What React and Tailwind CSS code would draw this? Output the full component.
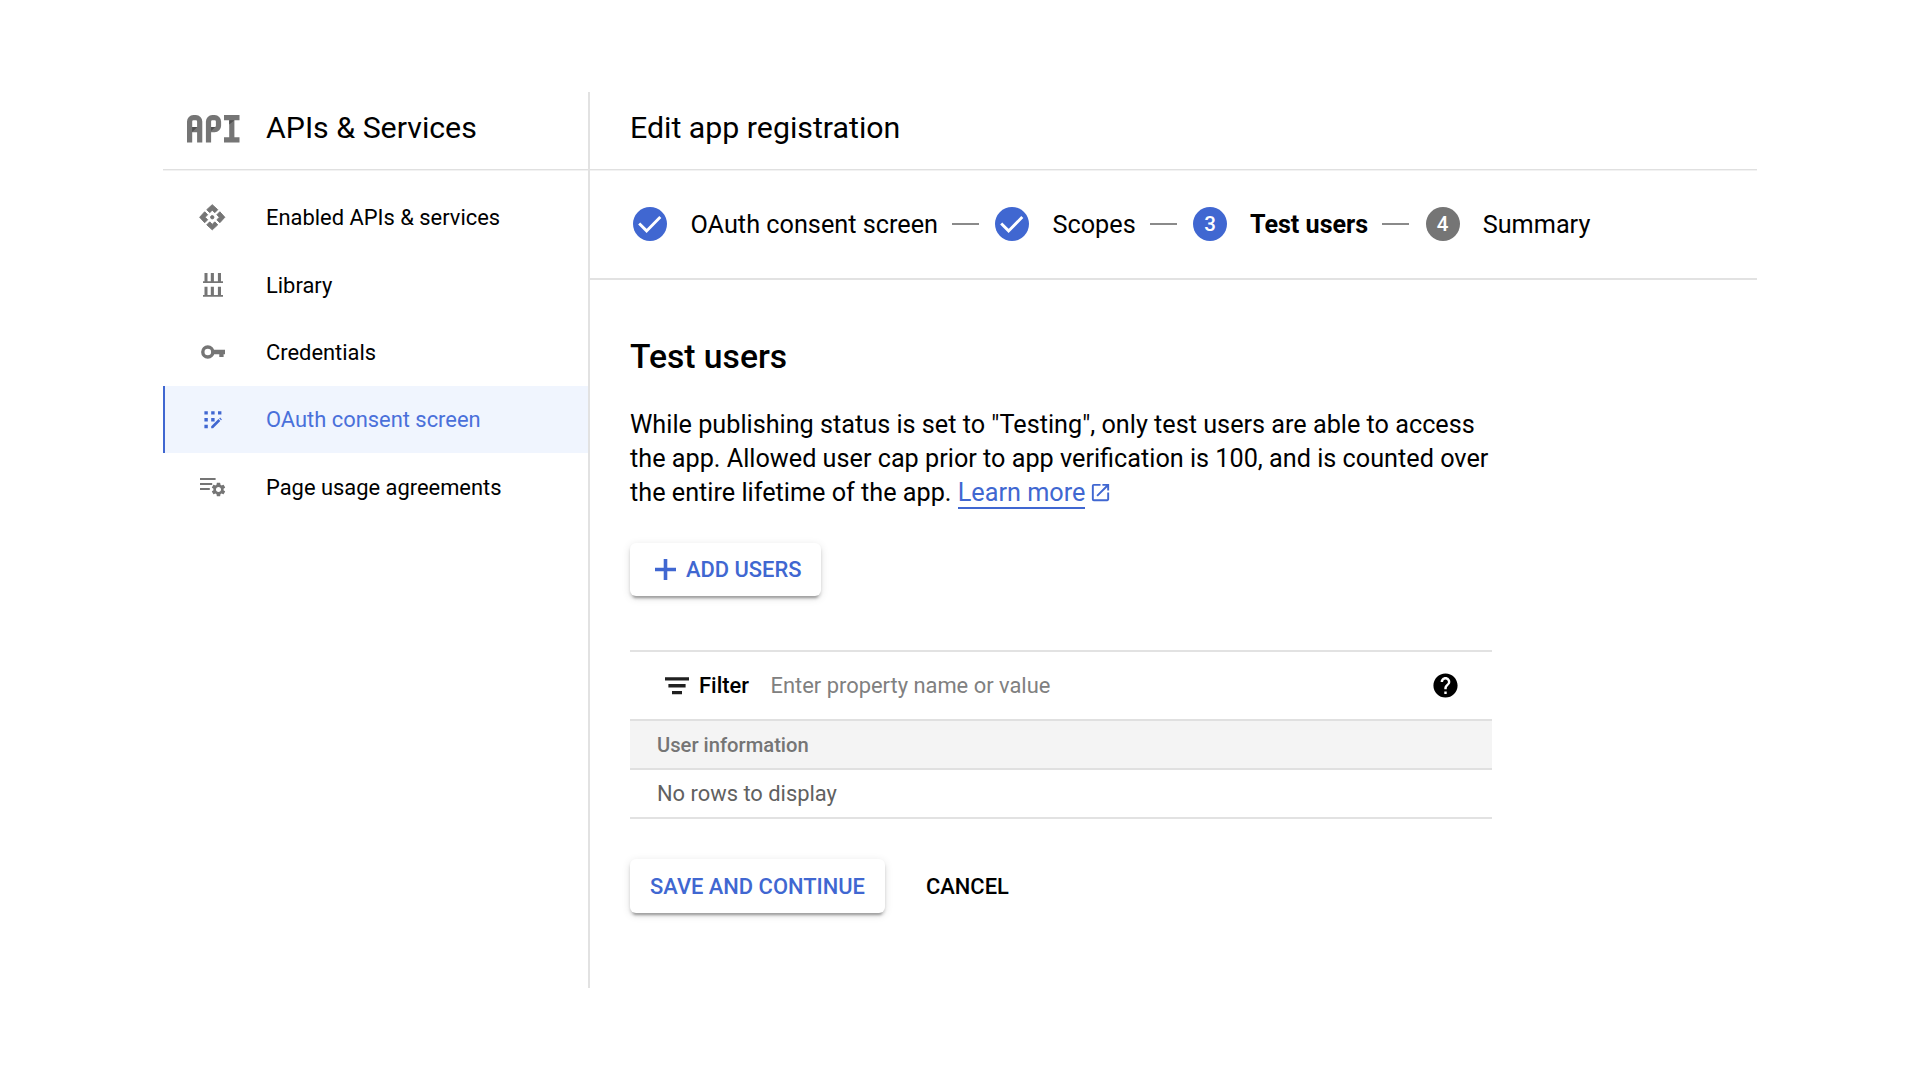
import React from "react";
import { MdHelp, MdOutlineOpenInNew, MdSettings } from "react-icons/md";

function ApiLogo() {
  return (
    <svg width="53" height="28" viewBox="0 0 53 28" fill="none" className="block">
      <g stroke="#757575" strokeWidth="5.2">
        <path d="M2.6 27.4V6.5a3.8 3.8 0 0 1 3.8-3.8h2.5a3.8 3.8 0 0 1 3.8 3.8v20.9M2.6 14.6h10.1" />
        <path d="M21.5 27.4V6.5a3.8 3.8 0 0 1 3.8-3.8h2.4a3.8 3.8 0 0 1 3.8 3.8v4.3a3.8 3.8 0 0 1-3.8 3.8h-6.2" />
        <path d="M37 2.6h15.5M44.8 2.6v22M37 24.8h15.5" />
      </g>
      <path d="M5.2 12h5l-5 5zM24.1 12h4.2l-4.2 4zM42.2 5.2h5.2l-5.2 4.4z" fill="#505050" />
    </svg>
  );
}

function ApiIcon() {
  return (
    <svg width="28.5" height="28.5" viewBox="0 0 24 24" fill="#757575" stroke="#757575" strokeWidth="0.8" strokeLinejoin="round">
      <circle cx="12" cy="12" r="1.4" />
      <path d="M12 6l2.12 2.12 2.5-2.5L12 1.4 7.38 5.62l2.5 2.5zM6 12l2.12-2.12-2.5-2.5L1.4 12l4.22 4.62 2.5-2.5zM18 12l-2.12 2.12 2.5 2.5L22.6 12l-4.22-4.62-2.5 2.5zM12 18l-2.12-2.12-2.5 2.5L12 22.6l4.62-4.22-2.5-2.5z" />
    </svg>
  );
}

function LibraryIcon() {
  return (
    <svg width="20" height="24" viewBox="0 0 20 24" fill="#757575">
      <path d="M1.5 0h3v8.3h3.3V0h3.1v8.3h4V0h3.1v8.3H20V10H0V8.3h1.5z" />
      <path d="M1.5 13.8h3v8.2h3.3v-8.2h3.1v8.2h4v-8.2h3.1v8.2H20v1.7H0v-1.7h1.5z" />
    </svg>
  );
}

function KeyIcon() {
  return (
    <svg width="24" height="14" viewBox="0 0 24 14" fill="none">
      <circle cx="6.8" cy="7" r="5" stroke="#757575" strokeWidth="3.4" />
      <path d="M12 4.7h12v4.6h-1.4v2.6h-4.3V9.3H12z" fill="#757575" />
    </svg>
  );
}

function ConsentIcon() {
  return (
    <svg width="18" height="18" viewBox="0 0 18 18" fill="#4067d1">
      <path d="M.4.2h3.4v3.4H.4zM7.2.2h3.4v3.4H7.2zM14 .2h3.4v3.4H14zM.4 7h3.4v3.4H.4zM7.2 7h3.4v3.4H7.2zM.4 13.8h3.4v3.4H.4z" />
      <path d="M7.2 17.2v-1.9l7.3-7.2 1.8 1.8-7.2 7.3zM15.2 7.4l.9-.8 1.8 1.8-.8.9z" />
    </svg>
  );
}

function AgreementsIcon() {
  return (
    <div className="mt-[2px] ml-[1px] h-5 w-[26px] relative">
      <svg width="16" height="14" viewBox="0 0 16 14" fill="#757575" className="block">
        <path d="M0 0h15.6v2.1H0zM0 5h12.2v2.1H0zM0 10h9.8v2.1H0z" />
      </svg>
      <MdSettings className="absolute top-[3.5px] left-[10px] size-[17px] text-[#757575]" />
    </div>
  );
}

const navItems = [
  { label: "Enabled APIs & services", icon: <ApiIcon /> },
  { label: "Library", icon: <LibraryIcon /> },
  { label: "Credentials", icon: <KeyIcon /> },
  { label: "OAuth consent screen", icon: <ConsentIcon />, active: true },
  { label: "Page usage agreements", icon: <AgreementsIcon /> },
];

function NavItem({ item }) {
  return (
    <li
      className={
        "flex h-[67.33px] items-center border-l-2 " +
        (item.active ? "border-[#4067d1] bg-[#f0f5fe] text-[#4a70da]" : "border-transparent")
      }
    >
      <span className="flex w-[95px] shrink-0 justify-center text-[#757575]">{item.icon}</span>
      <span className="ml-[6px] pt-[1.4px] text-[21.9px]">{item.label}</span>
    </li>
  );
}

function Sidebar() {
  return (
    <aside className="w-[427px] shrink-0 border-r-2 border-[#e2e2e2]">
      <header className="flex h-[78px] items-center border-b border-[#e0e0e0] pb-[5px] pl-6 shadow-[0_1px_0_#f2f2f2]">
        <div className="pt-[1px]">
          <ApiLogo />
        </div>
        <h1 className="ml-[26px] text-[30.3px]">APIs &amp; Services</h1>
      </header>
      <ul className="pt-[14px]">
        {navItems.map((item) => (
          <NavItem key={item.label} item={item} />
        ))}
      </ul>
    </aside>
  );
}

function Badge({ children, muted }) {
  return (
    <span
      className={
        "flex size-[34px] shrink-0 items-center justify-center rounded-full text-[20.5px] font-medium text-white " +
        (muted ? "bg-[#757575]" : "bg-[#4067d1]")
      }
    >
      {children}
    </span>
  );
}

function Check() {
  return (
    <svg width="34" height="34" viewBox="0 0 34 34" fill="none" stroke="#fff" strokeWidth="2.9">
      <path d="M6.2 16.5l7.4 7.4L27.3 10.1" />
    </svg>
  );
}

function Connector() {
  return <span className="h-[2px] w-[27px] shrink-0 bg-[#8a8a8a]" />;
}

function Stepper() {
  return (
    <nav className="flex h-[110px] items-center border-b-2 border-[#e2e2e2] pl-[43px] text-[25.25px]">
      <Badge><Check /></Badge>
      <span className="ml-[23.5px] w-[261.5px] pt-[2px]">OAuth consent screen</span>
      <Connector />
      <span className="w-[16px]" />
      <Badge><Check /></Badge>
      <span className="ml-[23.5px] w-[97.5px] pt-[2px]">Scopes</span>
      <Connector />
      <span className="w-[16px]" />
      <Badge>3</Badge>
      <span className="ml-[23px] w-[132px] pt-[2px] text-[25.1px] font-bold">Test users</span>
      <Connector />
      <span className="w-[16.5px]" />
      <Badge muted>4</Badge>
      <span className="ml-[23.2px] pt-[2px]">Summary</span>
    </nav>
  );
}

const raised =
  "flex items-center rounded-[6px] bg-white font-medium text-[#4067d1] text-[21.9px] shadow-[0_5px_2px_-3px_rgba(0,0,0,0.2),0_3px_3px_0_rgba(0,0,0,0.14),0_2px_8px_0_rgba(0,0,0,0.12)]";

function UsersTable() {
  return (
    <section className="mt-[54px] w-[862px] border-t-2 border-[#e2e2e2]">
      <div className="flex h-[67px] items-center pl-[35px] pr-[32.5px] text-[21.9px]">
        <svg width="24" height="18" viewBox="0 0 24 18" fill="#202020">
          <path d="M0 .3h24v3.3H0zM3.4 7.1h17.2v3.3H3.4zM7 14h10v3.3H7z" />
        </svg>
        <span className="ml-[10px] w-[71.5px] font-medium">Filter</span>
        <span className="text-[#808080]">Enter property name or value</span>
        <MdHelp className="ml-auto size-[29px]" />
      </div>
      <div className="flex h-[51px] items-center border-y-2 border-[#e0e0e0] bg-[#f4f4f4] pt-[1.5px] pl-[27px] text-[20.2px] font-medium text-[#757575]">
        User information
      </div>
      <div className="flex h-[49px] items-center border-b-2 border-[#e2e2e2] pl-[27px] text-[21.9px] text-[#616161]">
        No rows to display
      </div>
    </section>
  );
}

export default function App() {
  return (
    <div className="flex h-[1080px] w-[1920px] bg-white pt-[92px] pb-[92px] pl-[163px] font-['Roboto',sans-serif] leading-none text-black">
      <Sidebar />
      <main className="w-[1166.5px]">
        <header className="flex h-[78px] items-center border-b border-[#e0e0e0] pb-[5px] pl-10 shadow-[0_1px_0_#f2f2f2]">
          <h2 className="text-[30.3px]">Edit app registration</h2>
        </header>
        <Stepper />
        <div className="pl-10">
          <h3 className="mt-[60px] text-[33.67px] leading-[34px] font-medium">Test users</h3>
          <p className="mt-[34.4px] text-[25.22px] leading-[33.67px] whitespace-nowrap">
            While publishing status is set to "Testing", only test users are able to access
            <br />
            the app. Allowed user cap prior to app verification is 100, and is counted over
            <br />
            the entire lifetime of the app.{" "}
            <a className="border-b-2 border-[#4067d1] pb-[-1px] text-[#4067d1]">Learn more</a>
            <MdOutlineOpenInNew className="mb-[4px] ml-[4px] inline size-[23px] text-[#4067d1]" />
          </p>
          <button className={raised + " mt-[33.6px] h-[53px] w-[191px] pl-[25px]"}>
            <svg width="21" height="21" viewBox="0 0 21 21" fill="#4067d1">
              <path d="M8.7 0h3.6v8.7H21v3.6h-8.7V21H8.7v-8.7H0V8.7h8.7z" />
            </svg>
            <span className="ml-[10px]">ADD USERS</span>
          </button>
          <UsersTable />
          <div className="mt-[40px] flex">
            <button className={raised + " h-[54px] w-[255px] pt-[1px] pl-5"}>SAVE AND CONTINUE</button>
            <button className="ml-[41px] pt-[1px] text-[21.9px] font-medium">CANCEL</button>
          </div>
        </div>
      </main>
    </div>
  );
}
